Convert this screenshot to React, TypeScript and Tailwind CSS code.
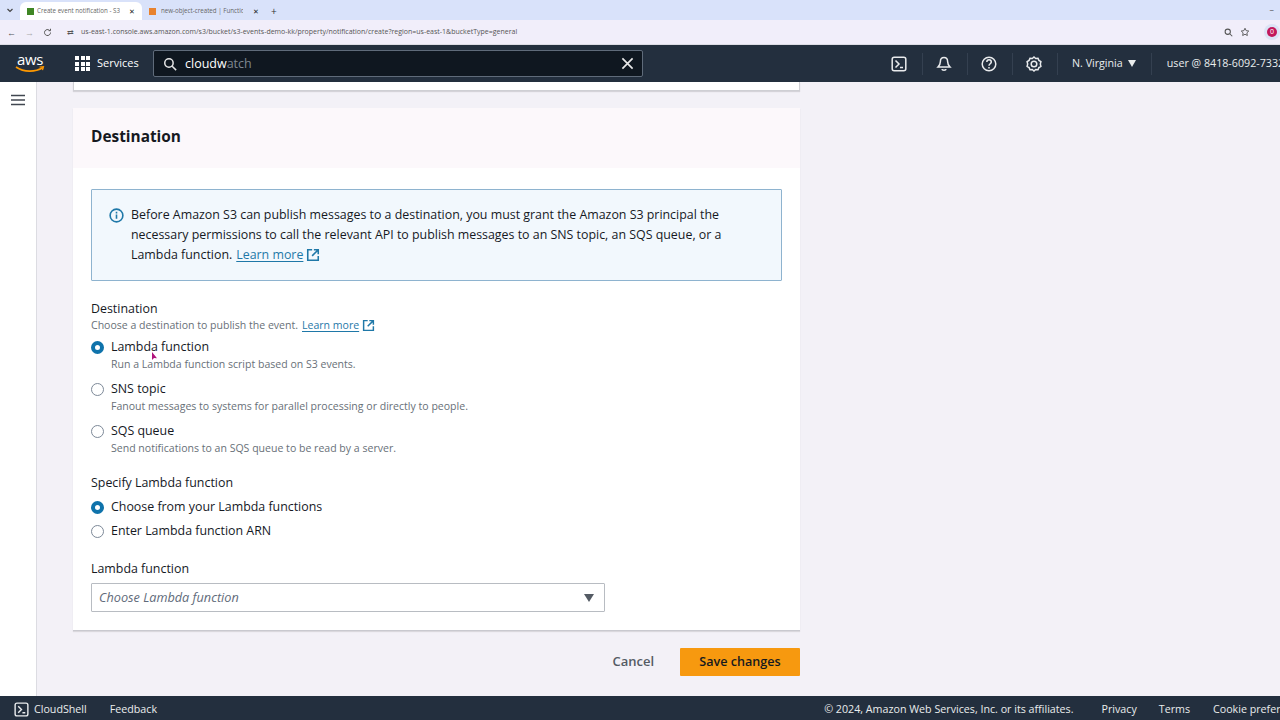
import React from "react";

const font = { fontFamily: '"Open Sans", "Noto Sans", sans-serif' };

function Ext({ s = 14 }: { s?: number }) {
  return (
    <svg width={s} height={s} viewBox="0 0 16 16" fill="none" stroke="#1f78a8" strokeWidth="1.8" className="shrink-0">
      <path d="M7 2H2v12h12V9" />
      <path d="M9 2h5v5M14 2L7 9" />
    </svg>
  );
}

function Radio({ on }: { on?: boolean }) {
  return on ? (
    <span className="w-[13px] h-[13px] rounded-full border-[4px] border-[#0f73ab] bg-white shrink-0" />
  ) : (
    <span className="w-[13px] h-[13px] rounded-full border border-[#7d8998] bg-white shrink-0" />
  );
}

function Option({ on, label, desc }: { on?: boolean; label: string; desc?: string }) {
  return (
    <div>
      <div className="flex items-center gap-[7px] h-[18px]">
        <Radio on={on} />
        <span className="text-[12.4px] text-[#16191f] leading-[18px]">{label}</span>
      </div>
      {desc && <div className="text-[10.55px] text-[#687078] leading-[16px] ml-[20px]">{desc}</div>}
    </div>
  );
}

function Sep() {
  return <span className="block w-px h-[22px] bg-[#344050]" />;
}

export default function App() {
  return (
    <div style={font} className="w-[1280px] h-[720px] overflow-hidden flex flex-col bg-[#f3f1f7] relative">
      {/* Tab strip */}
      <div className="h-[20px] bg-[#d9e2fa] flex items-end pl-[5px] relative shrink-0">
        <svg width="8" height="8" viewBox="0 0 8 8" className="mb-[6px] ml-[1px] mr-[6px]" fill="none" stroke="#444" strokeWidth="1.2"><path d="M1.5 3L4 5.5 6.5 3" /></svg>
        <div className="w-[122px] h-[18px] bg-white rounded-t-[6px] flex items-center pl-[7px] pr-[7px] gap-[3px]">
          <span className="w-[7px] h-[7px] bg-[#3f8624] shrink-0" />
          <span className="text-[6.2px] text-[#666] overflow-hidden flex-1 whitespace-nowrap mr-[6px]">Create event notification - S3 b</span>
          <span className="text-[7px] text-[#222] leading-none">✕</span>
        </div>
        <div className="w-[120px] h-[18px] flex items-center pl-[7px] pr-[3px] gap-[5px]">
          <span className="w-[7px] h-[7px] bg-[#e8822e] shrink-0" />
          <span className="text-[6.2px] text-[#666] overflow-hidden flex-1 whitespace-nowrap mr-[5px]">new-object-created | Function</span>
          <span className="text-[7px] text-[#222] leading-none">✕</span>
        </div>
        <span className="text-[10px] text-[#333] mb-[4px] ml-[9px] leading-none">+</span>
        <span className="absolute right-[6px] top-[6px] text-[8px] text-[#444] leading-none">−</span>
      </div>
      {/* Address bar */}
      <div className="h-[25px] bg-[#f1eefa] flex items-center pl-[7px] shrink-0 border-b border-[#dcdce4]">
        <span className="text-[9px] text-[#555] w-[18px] leading-none">←</span>
        <span className="text-[9px] text-[#aaa] w-[18px] leading-none">→</span>
        <svg width="9" height="9" viewBox="0 0 12 12" fill="none" stroke="#555" strokeWidth="1.3" className="mr-[15px]"><path d="M10 6a4 4 0 1 1-1.2-2.8M10 1v2.6H7.4" /></svg>
        <span className="text-[8px] text-[#555] mr-[7px] leading-none">⇄</span>
        <span className="text-[7px] text-[#555] whitespace-nowrap flex-1">us-east-1.console.aws.amazon.com/s3/bucket/s3-events-demo-kk/property/notification/create?region=us-east-1&amp;bucketType=general</span>
        <svg width="9" height="9" viewBox="0 0 12 12" fill="none" stroke="#555" strokeWidth="1.4" className="mr-[7px]"><circle cx="5" cy="5" r="3.5" /><path d="M8 8l3 3" /></svg>
        <svg width="10" height="10" viewBox="0 0 24 24" fill="none" stroke="#444" strokeWidth="2" className="mr-[14px]"><path d="M12 3l2.8 5.8 6.2.9-4.5 4.4 1.1 6.3L12 17.4 6.4 20.4l1.1-6.3L3 9.7l6.2-.9z" /></svg>
        <span className="w-[16px] h-[16px] rounded-full bg-[#dbe3f5] flex items-center justify-center">
          <span className="w-[10px] h-[10px] rounded-full bg-[#c2185b] text-white text-[7px] leading-[10px] text-center">0</span>
        </span>
      </div>
      {/* AWS header */}
      <div className="h-[37px] bg-[#232f3e] flex items-center shrink-0 relative">
        <div className="w-[60px] flex flex-col items-center">
          <span className="text-[15px] text-white leading-[13px] tracking-[-0.3px]">aws</span>
          <svg width="30" height="8" viewBox="0 0 30 8" fill="none"><path d="M1 1c8 5.5 19 5.5 27 .5" stroke="#ff9900" strokeWidth="1.7" /><path d="M24.5 1l4-.3-1 3.5" stroke="#ff9900" strokeWidth="1.2" /></svg>
        </div>
        <div className="ml-[15px] grid grid-cols-3 gap-[1.5px] w-[15px]">
          {Array.from({ length: 9 }).map((_, i) => <span key={i} className="w-[4px] h-[4px] bg-white" />)}
        </div>
        <span className="text-[11px] text-white ml-[7px] w-[56px]">Services</span>
        <div className="w-[490px] h-[27px] bg-[#0f1720] border border-[#5f6b7a] rounded-[2px] flex items-center pl-[9px] pr-[8px]">
          <svg width="14" height="14" viewBox="0 0 16 16" fill="none" stroke="#e8e8e8" strokeWidth="1.7"><circle cx="6.8" cy="6.8" r="4.8" /><path d="M10.5 10.5L15 15" /></svg>
          <span className="ml-[8px] text-[12.5px] text-white font-medium flex-1 pt-[1px]">cloudw<span className="text-[#7f8790] font-normal">atch</span></span>
          <svg width="13" height="13" viewBox="0 0 14 14" fill="none" stroke="#e8e8e8" strokeWidth="1.8"><path d="M1.5 1.5l11 11M12.5 1.5l-11 11" /></svg>
        </div>
        <div className="flex items-center absolute left-[891px] top-0 h-[37px]">
          <svg width="16" height="16" viewBox="0 0 16 16" fill="none" stroke="#e9ebed" strokeWidth="1.5"><rect x="1.2" y="1.2" width="13.6" height="13.6" rx="2" /><path d="M4.5 4.5L8 8l-3.5 3.5M9 11.5h3" /></svg>
          <span className="ml-[15px] mr-[13px]"><Sep /></span>
          <svg width="16" height="16" viewBox="0 0 16 16" fill="none" stroke="#e9ebed" strokeWidth="1.5"><path d="M8 1.5c-2.5 0-3.6 2-3.6 4 0 3-2.400 5.500-2.400 5.500h12s-2.400-2.500-2.400-5.500c0-2-1.100-4-3.600-4zM6 13c0 1.500 4 1.500 4 0" /></svg>
          <span className="ml-[15px] mr-[13px]"><Sep /></span>
          <svg width="16" height="16" viewBox="0 0 16 16" fill="none" stroke="#e9ebed" strokeWidth="1.5"><circle cx="8" cy="8" r="6.8" /><path d="M5.8 6c0-3 4.5-3 4.5 0 0 1.8-2.3 1.8-2.3 3.8M8 11v1.5" /></svg>
          <span className="ml-[15px] mr-[13px]"><Sep /></span>
          <svg width="16" height="16" viewBox="0 0 16 16" fill="none" stroke="#e9ebed" strokeWidth="1.5"><path d="M8 1l1.700 1.500 2.300-.2.900 2.100 2 1.200-.6 2.400.6 2.400-2 1.200-.9 2.100-2.300-.2L8 15l-1.700-1.500-2.300.2-.9-2.100-2-1.200.6-2.400-.6-2.400 2-1.200.9-2.100 2.300.2z" /><circle cx="8" cy="8" r="2.8" /></svg>
          <span className="ml-[15px] mr-[14px]"><Sep /></span>
          <span className="text-[10.7px] text-[#eaeded] whitespace-nowrap">N. Virginia</span>
          <span className="ml-[5px] w-0 h-0 border-l-[4.5px] border-r-[4.5px] border-t-[7px] border-l-transparent border-r-transparent border-t-[#eaeded]" />
          <span className="ml-[15px] mr-[15px]"><Sep /></span>
          <span className="text-[10.7px] text-[#eaeded] whitespace-nowrap">user @ 8418-6092-7332</span>
        </div>
      </div>
      {/* Body */}
      <div className="flex flex-1 min-h-0">
        <div className="w-[37px] bg-white border-r border-[#dcdce2] shrink-0 pt-[12px] flex justify-center">
          <svg width="14" height="12" viewBox="0 0 14 12" fill="none" stroke="#414750" strokeWidth="1.7"><path d="M0 1.5h14M0 6h14M0 10.5h14" /></svg>
        </div>
        <div className="flex-1 pl-[36px] min-w-0">
          <div className="w-[727px]">
            <div className="h-[9px] bg-white border-b border-x border-[#cfcfd4] shadow-[0_1px_1px_rgba(0,0,0,0.12)]" />
            <div className="mt-[17px] bg-white border-b border-[#c9c9cf] shadow-[0_1px_1px_rgba(0,0,0,0.1)] h-[523px] flex flex-col">
              <div className="h-[60px] bg-[#fcf8fb] flex items-center px-[18px]">
                <h2 className="text-[15.4px] font-bold text-[#16191f] leading-[20px] mt-[-3px]">Destination</h2>
              </div>
              <div className="px-[18px] pt-[21px]">
                <div className="h-[92px] bg-[#f2f8fd] border border-[#8eb3cf] rounded-[1px] flex pl-[17px] pt-[15px]">
                  <svg width="15" height="15" viewBox="0 0 16 16" fill="none" stroke="#1f78a8" strokeWidth="1.7" className="mt-[3px] shrink-0"><circle cx="8" cy="8" r="6.8" /><path d="M8 7v4.500M8 4v1.800" /></svg>
                  <div className="ml-[7px] text-[12.4px] leading-[20px] text-[#16191f] w-[620px]">
                    <div className="whitespace-nowrap">Before Amazon S3 can publish messages to a destination, you must grant the Amazon S3 principal the</div>
                    <div className="whitespace-nowrap">necessary permissions to call the relevant API to publish messages to an SNS topic, an SQS queue, or a</div>
                    <div className="flex items-center whitespace-nowrap">
                      Lambda function.
                      <span className="text-[#1f78a8] underline underline-offset-2 ml-[4px]">Learn more</span>
                      <span className="ml-[3px]"><Ext /></span>
                    </div>
                  </div>
                </div>
                <div className="mt-[19px] text-[12.4px] leading-[18px] text-[#16191f]">Destination</div>
                <div className="flex items-center gap-[3px] text-[10.55px] leading-[16px] text-[#687078] mt-[-1px]">
                  Choose a destination to publish the event.
                  <span className="text-[#1f78a8] underline underline-offset-2 ml-[1px]">Learn more</span>
                  <Ext s={13} />
                </div>
                <div className="mt-[5px] flex flex-col gap-[8px]">
                  <Option on label="Lambda function" desc="Run a Lambda function script based on S3 events." />
                  <Option label="SNS topic" desc="Fanout messages to systems for parallel processing or directly to people." />
                  <Option label="SQS queue" desc="Send notifications to an SQS queue to be read by a server." />
                </div>
                <div className="mt-[18px] text-[12.4px] leading-[18px] text-[#16191f]">Specify Lambda function</div>
                <div className="mt-[6px] flex flex-col gap-[6px]">
                  <Option on label="Choose from your Lambda functions" />
                  <Option label="Enter Lambda function ARN" />
                </div>
                <div className="mt-[20px] text-[12.4px] leading-[18px] text-[#16191f]">Lambda function</div>
                <div className="mt-[5px] w-[514px] h-[29px] border border-[#b8bcc2] rounded-[1px] flex items-center pl-[7px] pr-[10px] bg-white">
                  <span className="italic text-[12.7px] text-[#5f6b7a] flex-1">Choose Lambda function</span>
                  <span className="w-0 h-0 border-l-[5px] border-r-[5px] border-t-[8px] border-l-transparent border-r-transparent border-t-[#545b64]" />
                </div>
              </div>
            </div>
            <div className="mt-[17px] flex justify-end items-center">
              <span className="text-[13px] font-semibold text-[#545b64] mr-[26px]">Cancel</span>
              <span className="w-[120px] h-[28px] bg-[#f7990f] rounded-[1px] flex items-center justify-center text-[12.6px] font-semibold text-[#16191f]">Save changes</span>
            </div>
          </div>
        </div>
      </div>
      {/* Footer */}
      <div className="h-[24px] bg-[#232f3e] flex items-center shrink-0 relative text-[10.7px] text-[#eaeded] whitespace-nowrap pt-[2px]">
        <svg width="15" height="15" viewBox="0 0 16 16" fill="none" stroke="#e9ebed" strokeWidth="1.5" className="ml-[14px]"><rect x="1.2" y="1.2" width="13.6" height="13.6" rx="2" /><path d="M4.5 4.5L8 8l-3.5 3.5M9 11.5h3" /></svg>
        <span className="ml-[5px]">CloudShell</span>
        <span className="ml-[23px]">Feedback</span>
        <div className="ml-auto flex items-center">
          <span>© 2024, Amazon Web Services, Inc. or its affiliates.</span>
          <span className="ml-[28px]">Privacy</span>
          <span className="ml-[22px]">Terms</span>
          <span className="ml-[23px] w-[67px] overflow-hidden">Cookie preferences</span>
        </div>
      </div>
      {/* Mouse cursor */}
      <svg width="6" height="9" viewBox="0 0 6 9" className="absolute left-[152px] top-[352px]"><path d="M0 0v8l2-2 3 .2z" fill="#b0137c" /></svg>
    </div>
  );
}
